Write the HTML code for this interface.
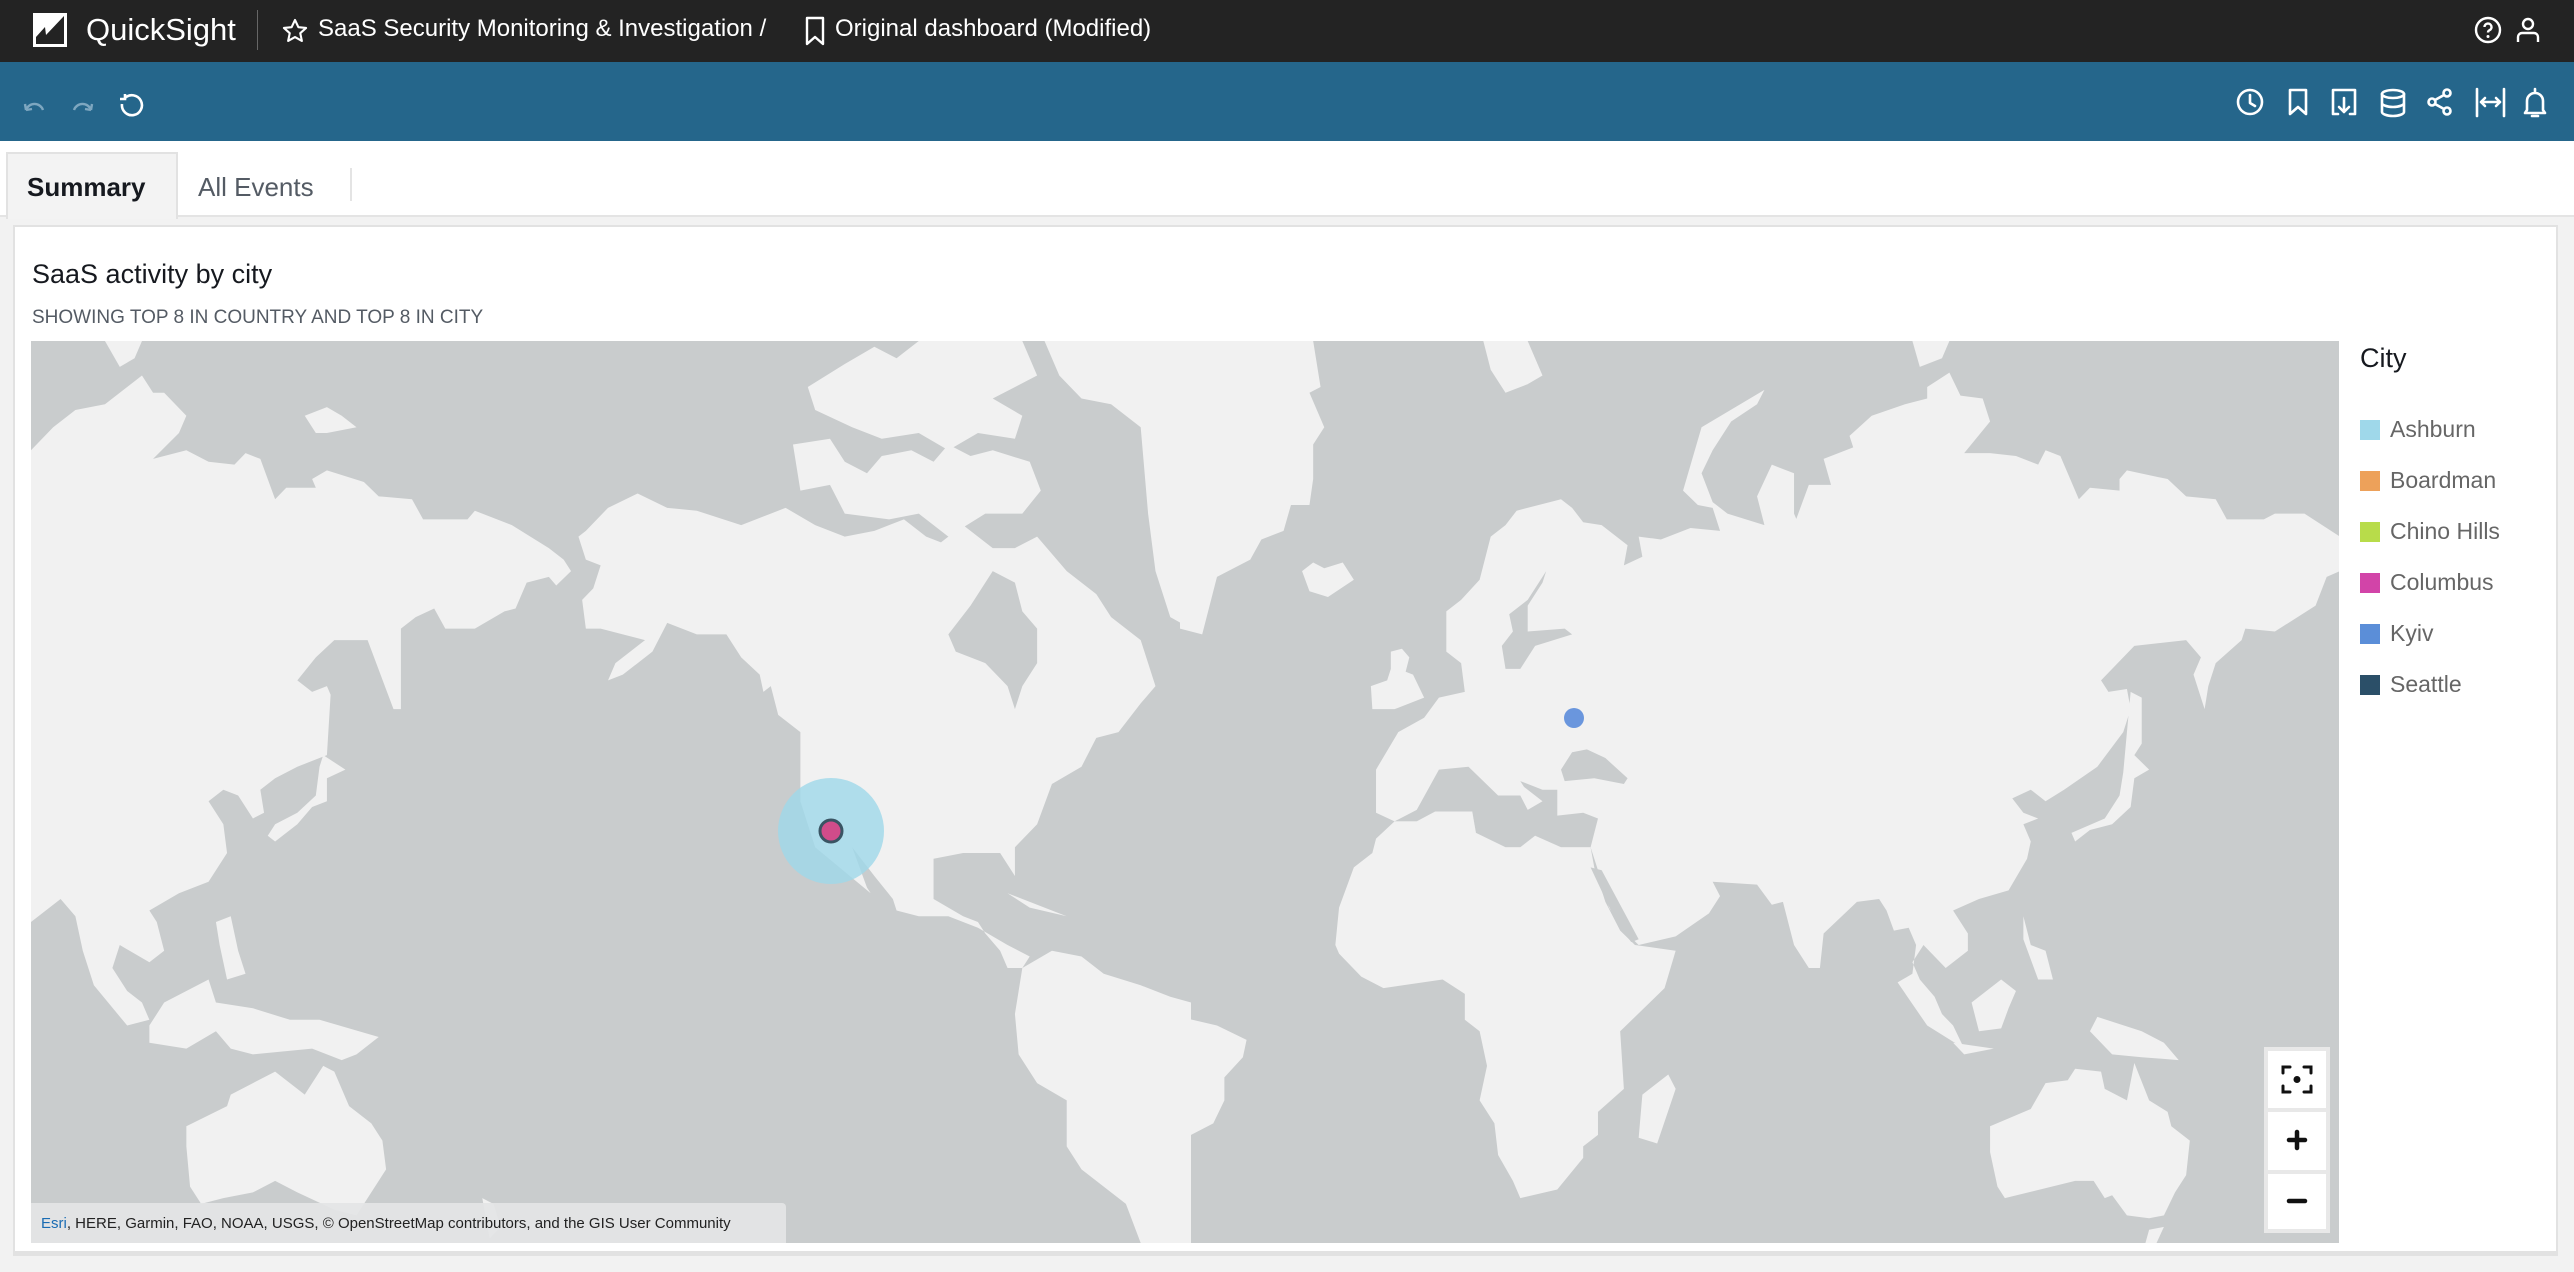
<!DOCTYPE html>
<html><head><meta charset="utf-8"><style>
*{margin:0;padding:0;box-sizing:border-box}
body{width:2574px;height:1272px;background:#f2f2f2;font-family:"Liberation Sans","DejaVu Sans",sans-serif;position:relative;overflow:hidden}
.abs{position:absolute}
#top{left:0;top:0;width:2574px;height:62px;background:#232323;color:#fff}
#bar{left:0;top:62px;width:2574px;height:79px;background:#25668b}
#tabs{left:0;top:141px;width:2574px;height:76px;background:#fff;border-bottom:2px solid #e4e4e4}
#card{left:13px;top:225px;width:2545px;height:1031px;background:#fff;border:2px solid #e2e2e2;border-bottom-width:5px}
.leg{position:absolute;left:2360px;width:20px;height:20px}
.lt{position:absolute;left:2390px;font-size:23px;color:#666;line-height:24px}
</style></head><body>
<div id="top" class="abs">
 <svg class="abs" style="left:33px;top:13px" width="34" height="34" viewBox="0 0 34 34"><rect width="34" height="34" fill="#fff"/><path d="M3 31 L3 24 L12 14 L13 22 L31 3 L31 31 Z" fill="#232323"/></svg>
 <div class="abs" style="left:86px;top:12px;font-size:31px;line-height:36px">QuickSight</div>
 <div class="abs" style="left:257px;top:10px;width:1px;height:40px;background:#666"></div>
 <svg class="abs" style="left:281px;top:17px" width="28" height="28" viewBox="0 0 24 24"><path d="M12 2.5l2.9 6.2 6.6.7-5 4.5 1.4 6.6L12 17.2l-5.9 3.3 1.4-6.6-5-4.5 6.6-.7z" fill="none" stroke="#fff" stroke-width="1.8" stroke-linejoin="round"/></svg>
 <div class="abs" style="left:318px;top:14px;font-size:24px;line-height:30px">SaaS Security Monitoring &amp; Investigation /</div>
 <svg class="abs" style="left:804px;top:16px" width="22" height="30" viewBox="0 0 22 30"><path d="M3 2h16v26l-8-7-8 7z" fill="none" stroke="#fff" stroke-width="2.4" stroke-linejoin="round"/></svg>
 <div class="abs" style="left:835px;top:14px;font-size:24px;line-height:30px">Original dashboard (Modified)</div>
 <svg class="abs" style="left:2474px;top:16px" width="28" height="28" viewBox="0 0 28 28"><circle cx="14" cy="14" r="12" fill="none" stroke="#fff" stroke-width="2.4"/><path d="M10.5 11a3.5 3.5 0 1 1 5 3.2c-1 .5-1.5 1.2-1.5 2.3" fill="none" stroke="#fff" stroke-width="2.4"/><circle cx="14" cy="20.5" r="1.5" fill="#fff"/></svg>
 <svg class="abs" style="left:2516px;top:17px" width="24" height="26" viewBox="0 0 24 26"><circle cx="12" cy="7" r="5" fill="none" stroke="#fff" stroke-width="2.4"/><path d="M2 25v-5a4 4 0 0 1 4-4h12a4 4 0 0 1 4 4v5" fill="none" stroke="#fff" stroke-width="2.4"/></svg>
</div>
<div id="bar" class="abs">
 <svg class="abs" style="left:22px;top:30px" width="140" height="28" viewBox="0 0 140 28">
  <path d="M4 18 a9 9 0 0 1 17 0 M4 18 l-1-6 M4 18 l6 -1" fill="none" stroke="#7ea7c0" stroke-width="2.4"/>
  <path d="M52 18 a9 9 0 0 1 17 0 M69 18 l1-6 M69 18 l-6 -1" fill="none" stroke="#7ea7c0" stroke-width="2.4"/>
  <path d="M103 6 a10 10 0 1 1 -3 6" fill="none" stroke="#fff" stroke-width="2.6"/><path d="M103 2 v5 h-5" fill="none" stroke="#fff" stroke-width="2.6"/>
 </svg>
 <svg class="abs" style="left:2234px;top:24px" width="320" height="34" viewBox="0 0 320 34" fill="none" stroke="#fff" stroke-width="2.6" stroke-linejoin="round" stroke-linecap="round">
  <circle cx="16" cy="16" r="12"/><path d="M16 9v8l5 3"/>
  <path d="M56 4h16v24l-8-7-8 7z"/>
  <path d="M104 28h-5V4h22v24h-5 M110 12v14 M105 21l5 5 5-5"/>
  <ellipse cx="159" cy="8" rx="11" ry="4"/><path d="M148 8v18c0 2 5 4 11 4s11-2 11-4V8 M148 17c0 2 5 4 11 4s11-2 11-4"/>
  <circle cx="198" cy="16" r="3.5"/><circle cx="213" cy="7" r="3.5"/><circle cx="213" cy="25" r="3.5"/><path d="M201 14l9-5 M201 18l9 5"/>
  <path d="M243 3v27 M270 3v27 M247 16h19 M251 12l-4 4 4 4 M262 12l4 4-4 4"/>
  <path d="M293 24V15a8 8 0 0 1 16 0v9l2 3h-20z M298 30h6 M301 3v2"/>
 </svg>
</div>
<div id="tabs" class="abs">
 <div class="abs" style="left:6px;top:11px;width:172px;height:67px;background:#f3f3f3;border:2px solid #e2e2e2;border-bottom:none"></div>
 <div class="abs" style="left:27px;top:31px;font-size:26px;font-weight:bold;color:#16191f">Summary</div>
 <div class="abs" style="left:198px;top:31px;font-size:26px;color:#545b64">All Events</div>
 <div class="abs" style="left:350px;top:27px;width:2px;height:33px;background:#e4e4e4"></div>
</div>
<div id="card" class="abs"></div>
<div class="abs" style="left:32px;top:259px;font-size:27px;color:#16191f">SaaS activity by city</div>
<div class="abs" style="left:32px;top:307px;font-size:19px;color:#545b64">SHOWING TOP 8 IN COUNTRY AND TOP 8 IN CITY</div>

<div class="abs" style="left:31px;top:341px;width:2308px;height:902px;background:#c9cccd;overflow:hidden">
<svg class="abs" style="left:0;top:0" width="1160" height="902" viewBox="0 0 1568 1568" preserveAspectRatio="none">
 <g fill="#f1f1f1">
  <path d="M0 190 L30 150 L60 120 L100 110 L130 80 L150 60 L165 90 L180 90 L210 130 L200 160 L165 205 L210 190 L240 210 L275 215 L290 195 L310 205 L330 275 L345 255 L385 255 L380 240 L400 225 L450 245 L470 270 L515 275 L530 310 L590 310 L600 295 L650 320 L700 360 L720 380 L730 400 L710 425 L700 410 L670 420 L655 465 L640 470 L600 500 L560 500 L545 465 L520 480 L500 500 L500 640 L490 640 L455 520 L410 520 L385 550 L360 590 L380 610 L400 600 L405 615 L400 720 L360 740 L330 760 L310 780 L315 820 L300 830 L280 790 L260 780 L240 800 L260 840 L265 890 L240 940 L200 960 L160 990 L170 1010 L180 1060 L160 1080 L120 1050 L110 1090 L130 1130 L150 1150 L160 1180 L130 1190 L85 1120 L70 1060 L60 1000 L40 970 L0 1010 Z"/>
  <path d="M370 130 L400 115 L420 130 L440 150 L400 160 L385 160 Z"/>
  <path d="M100 0 L150 0 L140 30 L120 45 Z"/>
  <path d="M395 720 L425 745 L400 760 L400 800 L380 810 L360 840 L330 870 L320 860 L330 840 L360 820 L385 790 L390 740 Z"/>
  <path d="M250 1010 L270 1000 L280 1060 L290 1100 L265 1110 L255 1050 Z"/>
  <path d="M180 1150 L240 1110 L250 1150 L300 1160 L350 1180 L390 1180 L470 1210 L440 1240 L420 1250 L380 1230 L300 1240 L270 1230 L250 1200 L210 1230 L160 1220 L160 1190 Z"/>
  <path d="M210 1365 L265 1330 L270 1310 L300 1290 L330 1270 L360 1300 L370 1310 L395 1260 L410 1270 L430 1330 L460 1360 L475 1390 L480 1440 L460 1480 L440 1520 L410 1510 L360 1480 L330 1460 L300 1480 L260 1490 L230 1500 L215 1470 L210 1400 Z"/>
  <path d="M610 1490 L625 1500 L635 1540 L620 1560 Z"/>
  <path d="M750 330 L780 290 L820 265 L860 290 L900 295 L960 320 L1000 300 L1020 290 L1060 320 L1100 340 L1140 330 L1180 310 L1210 340 L1230 350 L1260 320 L1300 360 L1330 360 L1360 340 L1380 370 L1400 400 L1440 440 L1460 480 L1500 520 L1520 600 L1500 630 L1470 680 L1440 690 L1420 740 L1380 770 L1360 840 L1330 880 L1330 930 L1310 890 L1260 890 L1220 900 L1220 970 L1260 1000 L1280 1010 L1290 1030 L1310 1060 L1320 1090 L1340 1090 L1350 1070 L1320 1050 L1280 1020 L1240 1000 L1200 1000 L1170 990 L1165 970 L1140 930 L1110 880 L1130 950 L1135 960 L1060 880 L1040 800 L1040 680 L1010 650 L1000 600 L990 610 L985 580 L960 550 L940 510 L900 510 L880 500 L860 490 L840 540 L800 580 L780 590 L790 560 L830 520 L770 500 L750 500 L745 450 L760 430 L770 390 L750 380 L740 340 Z"/>
  <path d="M1370 0 L1568 0 L1568 500 L1540 480 L1520 400 L1510 300 L1500 150 L1460 110 L1420 100 L1390 60 Z"/>
  <path d="M1050 80 L1100 40 L1140 10 L1170 30 L1200 0 L1340 0 L1360 60 L1300 100 L1340 130 L1330 170 L1280 160 L1240 190 L1200 160 L1150 170 L1110 150 L1060 120 Z"/>
  <path d="M1030 180 L1080 170 L1100 210 L1130 230 L1150 200 L1190 190 L1220 210 L1240 180 L1270 200 L1300 190 L1350 210 L1365 260 L1340 300 L1290 300 L1240 340 L1200 300 L1160 310 L1100 300 L1080 250 L1040 260 Z"/>
  <path d="M1320 960 L1380 990 L1400 1000 L1350 985 Z"/>
  <path d="M1340 1090 L1380 1060 L1420 1070 L1450 1100 L1500 1120 L1540 1140 L1568 1150 L1568 1568 L1500 1568 L1480 1500 L1420 1440 L1400 1400 L1400 1320 L1360 1290 L1335 1240 L1330 1170 Z"/>
 </g>
 <path d="M1240 510 L1270 460 L1300 400 L1330 420 L1340 470 L1360 500 L1360 560 L1340 600 L1330 640 L1320 600 L1290 560 L1250 540 Z" fill="#c9cccd"/>
</svg>
<svg class="abs" style="left:1149px;top:0" width="1160" height="902" viewBox="0 0 1568 1568" preserveAspectRatio="none">
 <g fill="#f1f1f1">
  <path d="M0 1175 L50 1190 L90 1215 L85 1245 L60 1280 L60 1320 L45 1360 L0 1390 Z"/>
  <path d="M0 0 L180 0 L190 80 L175 90 L195 150 L180 180 L180 240 L175 285 L150 285 L140 330 L110 345 L95 380 L50 410 L30 510 L0 500 Z"/>
  <path d="M165 400 L180 385 L195 395 L220 385 L235 415 L200 445 L175 435 Z"/>
  <path d="M285 540 L300 535 L310 550 L305 575 L315 580 L330 620 L290 640 L260 640 L258 600 L280 590 L285 570 Z"/>
  <path d="M265 745 L295 680 L330 655 L350 620 L385 610 L380 560 L360 540 L360 470 L380 450 L405 415 L420 340 L440 320 L455 295 L500 280 L515 275 L530 290 L545 315 L570 320 L605 355 L600 390 L625 375 L620 340 L650 345 L690 325 L730 330 L720 290 L700 285 L680 260 L705 150 L790 85 L780 110 L745 140 L720 190 L705 230 L720 280 L740 300 L790 320 L780 270 L800 215 L830 230 L830 300 L840 330 L825 360 L830 320 L850 250 L880 250 L870 205 L910 185 L905 165 L935 130 L980 110 L1010 100 L1010 80 L1040 55 L1055 95 L1085 100 L1095 140 L1060 195 L1095 195 L1130 200 L1160 215 L1170 190 L1190 200 L1215 275 L1230 255 L1270 260 L1270 240 L1280 225 L1335 240 L1360 270 L1400 275 L1415 310 L1465 310 L1480 300 L1520 300 L1568 340 L1568 400 L1550 410 L1535 460 L1480 505 L1440 500 L1435 520 L1400 560 L1390 600 L1385 640 L1370 580 L1380 550 L1360 520 L1290 530 L1245 590 L1255 610 L1280 605 L1285 640 L1275 680 L1240 740 L1195 780 L1170 800 L1150 780 L1125 795 L1140 820 L1160 830 L1140 840 L1150 870 L1145 900 L1120 955 L1080 970 L1045 990 L1065 1030 L1065 1060 L1035 1090 L1005 1050 L990 1080 L1000 1110 L1020 1140 L1030 1170 L1045 1190 L1060 1230 L1010 1190 L970 1115 L990 1100 L995 1050 L985 1020 L965 1025 L955 990 L945 970 L915 975 L870 1030 L865 1090 L850 1090 L830 1050 L815 975 L800 980 L780 945 L720 940 L730 965 L715 995 L670 1035 L620 1050 L600 1025 L580 985 L565 920 L555 880 L515 880 L480 860 L460 880 L440 880 L400 855 L395 818 L345 818 L320 835 L290 835 L265 820 Z"/>
  <path d="M990 0 L1040 0 L1030 30 L1000 45 Z"/>
  <path d="M410 0 L470 0 L490 60 L470 75 L440 90 L420 50 Z"/>
 </g>
 <path d="M320 815 L350 745 L390 740 L430 790 L460 790 L470 815 L490 800 L465 775 L460 765 L490 780 L510 780 L510 825 L545 820 L565 830 L555 880 L515 880 L480 860 L460 880 L440 880 L400 855 L395 818 L345 818 L320 835 L290 835 Z" fill="#c9cccd"/>
 <path d="M445 475 L470 450 L495 400 L490 420 L470 460 L470 505 L520 500 L530 510 L480 530 L460 570 L440 570 L435 530 L450 505 Z" fill="#c9cccd"/>
 <path d="M515 745 L530 715 L550 710 L575 725 L605 760 L600 770 L560 760 L520 765 Z" fill="#c9cccd"/>
 <g fill="#f1f1f1">
  <path d="M290 835 L320 835 L345 818 L395 818 L400 855 L440 880 L460 880 L480 860 L515 880 L555 880 L560 915 L575 975 L595 1025 L615 1050 L670 1060 L655 1125 L595 1200 L600 1300 L565 1340 L565 1380 L545 1400 L545 1420 L510 1475 L460 1490 L450 1460 L430 1415 L425 1360 L405 1320 L415 1260 L405 1200 L385 1180 L385 1135 L355 1110 L275 1125 L245 1105 L215 1065 L210 1050 L215 985 L235 915 L260 890 L265 865 Z"/>
  <path d="M625 1310 L660 1275 L670 1300 L645 1395 L620 1385 Z"/>
  <path d="M1285 610 L1300 620 L1300 700 L1290 720 L1310 745 L1290 760 L1285 810 L1260 840 L1230 850 L1210 870 L1205 855 L1250 830 L1270 790 L1275 750 L1280 680 Z"/>
  <path d="M1070 1150 L1110 1110 L1130 1130 L1120 1160 L1110 1195 L1080 1200 Z"/>
  <path d="M1045 1220 L1100 1230 L1060 1240 Z"/>
  <path d="M1240 1175 L1300 1200 L1330 1220 L1350 1250 L1300 1245 L1260 1240 L1230 1200 Z"/>
  <path d="M1140 1000 L1150 1050 L1170 1060 L1180 1110 L1160 1110 L1140 1040 Z"/>
  <path d="M1095 1365 L1150 1335 L1170 1290 L1200 1285 L1210 1265 L1245 1270 L1250 1300 L1280 1320 L1290 1255 L1310 1320 L1335 1340 L1340 1365 L1365 1390 L1360 1450 L1345 1480 L1330 1520 L1310 1525 L1280 1520 L1260 1485 L1250 1490 L1235 1460 L1210 1460 L1115 1490 L1105 1470 L1095 1410 Z"/>
  <path d="M1310 1545 L1330 1540 L1320 1568 L1305 1568 Z"/>
 </g>
 <path d="M555 915 L570 920 L620 1040 L610 1045 L590 1010 L575 970 Z" fill="#c9cccd"/>
</svg>
<svg class="abs" style="left:0;top:0" width="2308" height="902">
 <circle cx="800" cy="490" r="53" fill="#9fd8ea" opacity=".8"/>
 <circle cx="800" cy="490" r="11" fill="#d14c8a" stroke="#3a5463" stroke-width="3"/>
 <circle cx="1543" cy="377" r="10" fill="#6a96dd"/>
</svg>
</div>

<div class="abs" style="left:31px;top:1203px;width:755px;height:40px;background:rgba(228,229,230,.92);border-radius:0 4px 0 0"></div>
<div class="abs" style="left:41px;top:1215px;font-size:15px;color:#222;white-space:nowrap"><span style="color:#1a6cb3">Esri</span>, HERE, Garmin, FAO, NOAA, USGS, © OpenStreetMap contributors, and the GIS User Community</div>

<div class="abs" style="left:2264px;top:1047px;width:66px;height:186px;background:#e8e8e8"></div>
<div class="abs" style="left:2268px;top:1051px;width:58px;height:57px;background:#fff"></div>
<div class="abs" style="left:2268px;top:1112px;width:58px;height:58px;background:#fff"></div>
<div class="abs" style="left:2268px;top:1174px;width:58px;height:55px;background:#fff"></div>
<svg class="abs" style="left:2268px;top:1051px" width="58" height="178" viewBox="0 0 58 178" fill="none" stroke="#111" stroke-width="3" stroke-linecap="round">
 <path d="M15 22v-6h7 M36 16h7v6 M43 35v6h-7 M22 41h-7v-6"/><circle cx="29" cy="28.5" r="3.5" fill="#111" stroke="none"/>
 <path d="M29 81v16 M21 89h16" stroke-width="4.5"/>
 <path d="M21 150h16" stroke-width="4.5"/>
</svg>

<div class="abs" style="left:2360px;top:343px;font-size:27px;color:#16191f">City</div>
<div class="leg" style="top:420px;background:#9fd8ea"></div><div class="lt" style="top:417px">Ashburn</div>
<div class="leg" style="top:471px;background:#eda15a"></div><div class="lt" style="top:468px">Boardman</div>
<div class="leg" style="top:522px;background:#b8dc4a"></div><div class="lt" style="top:519px">Chino Hills</div>
<div class="leg" style="top:573px;background:#d244a8"></div><div class="lt" style="top:570px">Columbus</div>
<div class="leg" style="top:624px;background:#5b8ed8"></div><div class="lt" style="top:621px">Kyiv</div>
<div class="leg" style="top:675px;background:#2b4f68"></div><div class="lt" style="top:672px">Seattle</div>
</body></html>
